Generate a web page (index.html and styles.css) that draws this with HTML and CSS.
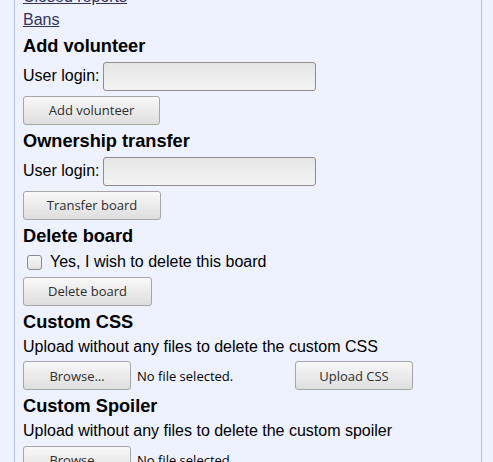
FILE: index.html
```html
<!DOCTYPE html>
<html>
<head>
<meta charset="utf-8">
<link rel="stylesheet" href="styles.css">
</head>
<body>
<div class="panel">
  <a class="link" href="#">Closed reports</a>
  <a class="link" href="#">Bans</a>

  <h3 class="title">Add volunteer</h3>
  <div class="row"><span>User login:</span><span class="field"></span></div>
  <div class="row"><span class="btn btn-add">Add volunteer</span></div>

  <h3 class="title">Ownership transfer</h3>
  <div class="row"><span>User login:</span><span class="field"></span></div>
  <div class="row"><span class="btn btn-transfer">Transfer board</span></div>

  <h3 class="title">Delete board</h3>
  <div class="row check-row"><span class="check"></span><span>Yes, I wish to delete this board</span></div>
  <div class="row"><span class="btn btn-delete">Delete board</span></div>

  <h3 class="title">Custom CSS</h3>
  <div class="text">Upload without any files to delete the custom CSS</div>
  <div class="row">
    <span class="file"><span class="btn btn-browse">Browse…</span><span class="file-name">No file selected.</span></span>
    <span class="btn btn-upload">Upload CSS</span>
  </div>

  <h3 class="title">Custom Spoiler</h3>
  <div class="text">Upload without any files to delete the custom spoiler</div>
  <div class="row">
    <span class="file"><span class="btn btn-browse">Browse…</span><span class="file-name">No file selected.</span></span>
  </div>
</div>
</body>
</html>
```
FILE: styles.css
```css
html, body {
  margin: 0;
  padding: 0;
  background: #eef2ff;
}
body {
  font-family: "Liberation Sans", Arial, sans-serif;
  font-size: 16px;
  color: #000;
  overflow: hidden;
}
.panel {
  margin: -12px 0 0 14px;
  width: 468px;
  border-left: 1px solid #b7c5d9;
  border-right: 1px solid #b7c5d9;
  padding: 0 0 40px 8px;
  box-sizing: border-box;
  display: flex;
  flex-direction: column;
  align-items: flex-start;
  gap: 5px;
}
.link {
  color: #34345c;
  text-decoration: underline;
  line-height: 18.4px;
}
.title {
  margin: 0;
  font-size: 18.2px;
  font-weight: bold;
  line-height: 22px;
}
.text {
  line-height: 18.4px;
}
.row {
  display: flex;
  align-items: center;
}
.field {
  display: inline-block;
  width: 213px;
  height: 29px;
  margin-left: 4px;
  box-sizing: border-box;
  border: 1px solid #8e8e8e;
  border-radius: 3px;
  background: linear-gradient(#e6e6e6, #f3f3f3);
}
.btn {
  display: inline-flex;
  align-items: center;
  justify-content: center;
  height: 29px;
  box-sizing: border-box;
  border: 1px solid #a6a6a6;
  border-radius: 3px;
  background: linear-gradient(#f8f8f8, #dedede);
  font-family: "Open Sans", "DejaVu Sans", sans-serif;
  font-size: 13px;
  color: #2e2e2e;
}
.btn-add { width: 137px; }
.btn-transfer { width: 138px; }
.btn-delete { width: 129px; }
.btn-browse { width: 108px; }
.btn-upload { width: 118px; margin-left: 4px; }
.check-row {
  height: 19px;
  padding-top: 1px;
}
.check {
  display: inline-block;
  width: 15px;
  height: 15px;
  box-sizing: border-box;
  margin: 0 8px 0 4px;
  border: 1px solid #8a8a8a;
  border-radius: 3px;
  background: linear-gradient(#f6f6f6, #e4e4e4);
}
.file {
  display: inline-flex;
  align-items: center;
  width: 268px;
}
.file-name {
  margin-left: 6px;
  font-family: "Open Sans", "DejaVu Sans", sans-serif;
  font-size: 13px;
  color: #000;
}
```
